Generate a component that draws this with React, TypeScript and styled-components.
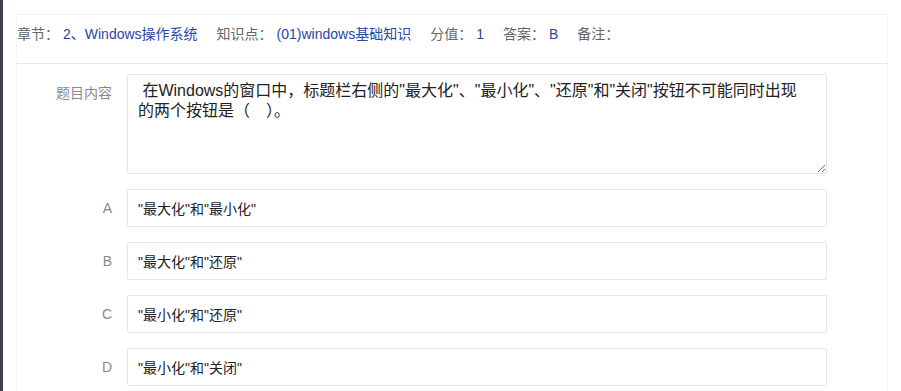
import React from "react";
import styled, { createGlobalStyle } from "styled-components";

const GlobalStyle = createGlobalStyle`
  html, body {
    margin: 0;
    padding: 0;
    background: #ffffff;
  }
  body {
    font-family: "Liberation Sans", "Noto Sans CJK SC", sans-serif;
    font-size: 14px;
    color: #333;
  }
`;

const Page = styled.div`
  display: flex;
  min-height: 391px;
  overflow: hidden;
`;

const SideStrip = styled.div`
  width: 3px;
  flex: none;
  background: #3d414c;
`;

const Main = styled.div`
  flex: 1;
  padding: 14px 13px 0 13px;
  min-width: 0;
`;

const Card = styled.section`
  border: 1px solid #f3f3f3;
  border-bottom: none;
  min-height: 400px;
`;

const Header = styled.div`
  display: flex;
  align-items: center;
  gap: 19px;
  padding: 9px 0 19px;
  line-height: 20px;
  border-bottom: 1px solid #e6e6e6;
`;

const MetaItem = styled.div`
  display: flex;
  gap: 4px;
  white-space: nowrap;
`;

const MetaLabel = styled.span`
  color: #666;
`;

const MetaValue = styled.span`
  color: #2846a6;
`;

const Body = styled.div`
  padding-top: 10px;
`;

const FormItem = styled.div`
  display: flex;
  align-items: flex-start;
  margin-bottom: 15px;
`;

const FormLabel = styled.label`
  width: 80px;
  flex: none;
  padding: 9px 15px;
  text-align: right;
  line-height: 20px;
  color: #8a8a8a;
`;

const TextArea = styled.textarea`
  box-sizing: border-box;
  width: 700px;
  height: 100px;
  padding: 6px 16px 6px 10px;
  border: 1px solid #e6e6e6;
  border-radius: 2px;
  font-family: "Liberation Sans", "Noto Sans CJK SC", sans-serif;
  font-size: 16px;
  line-height: 20px;
  color: #222;
  background: #fff;
  outline: none;
  margin: 0;
`;

const OptionInput = styled.input`
  box-sizing: border-box;
  width: 700px;
  height: 38px;
  padding: 0 10px;
  border: 1px solid #e6e6e6;
  border-radius: 2px;
  font-family: "Liberation Sans", "Noto Sans CJK SC", sans-serif;
  font-size: 14px;
  color: #222;
  background: #fff;
  outline: none;
  margin: 0;
`;

const meta = [
  { label: "章节：", value: "2、Windows操作系统" },
  { label: "知识点：", value: "(01)windows基础知识" },
  { label: "分值：", value: "1" },
  { label: "答案：", value: "B" },
  { label: "备注：", value: "" },
];

const options = [
  { key: "A", text: "\"最大化\"和\"最小化\"" },
  { key: "B", text: "\"最大化\"和\"还原\"" },
  { key: "C", text: "\"最小化\"和\"还原\"" },
  { key: "D", text: "\"最小化\"和\"关闭\"" },
];

export default function App() {
  return (
    <>
      <GlobalStyle />
      <Page>
        <SideStrip />
        <Main>
          <Card>
            <Header>
              {meta.map((m) => (
                <MetaItem key={m.label}>
                  <MetaLabel>{m.label}</MetaLabel>
                  {m.value && <MetaValue>{m.value}</MetaValue>}
                </MetaItem>
              ))}
            </Header>
            <Body>
              <FormItem>
                <FormLabel>题目内容</FormLabel>
                <TextArea
                  readOnly
                  defaultValue={
                    " 在Windows的窗口中，标题栏右侧的\"最大化\"、\"最小化\"、\"还原\"和\"关闭\"按钮不可能同时出现的两个按钮是（　）。"
                  }
                />
              </FormItem>
              {options.map((o) => (
                <FormItem key={o.key}>
                  <FormLabel>{o.key}</FormLabel>
                  <OptionInput readOnly defaultValue={o.text} />
                </FormItem>
              ))}
            </Body>
          </Card>
        </Main>
      </Page>
    </>
  );
}
